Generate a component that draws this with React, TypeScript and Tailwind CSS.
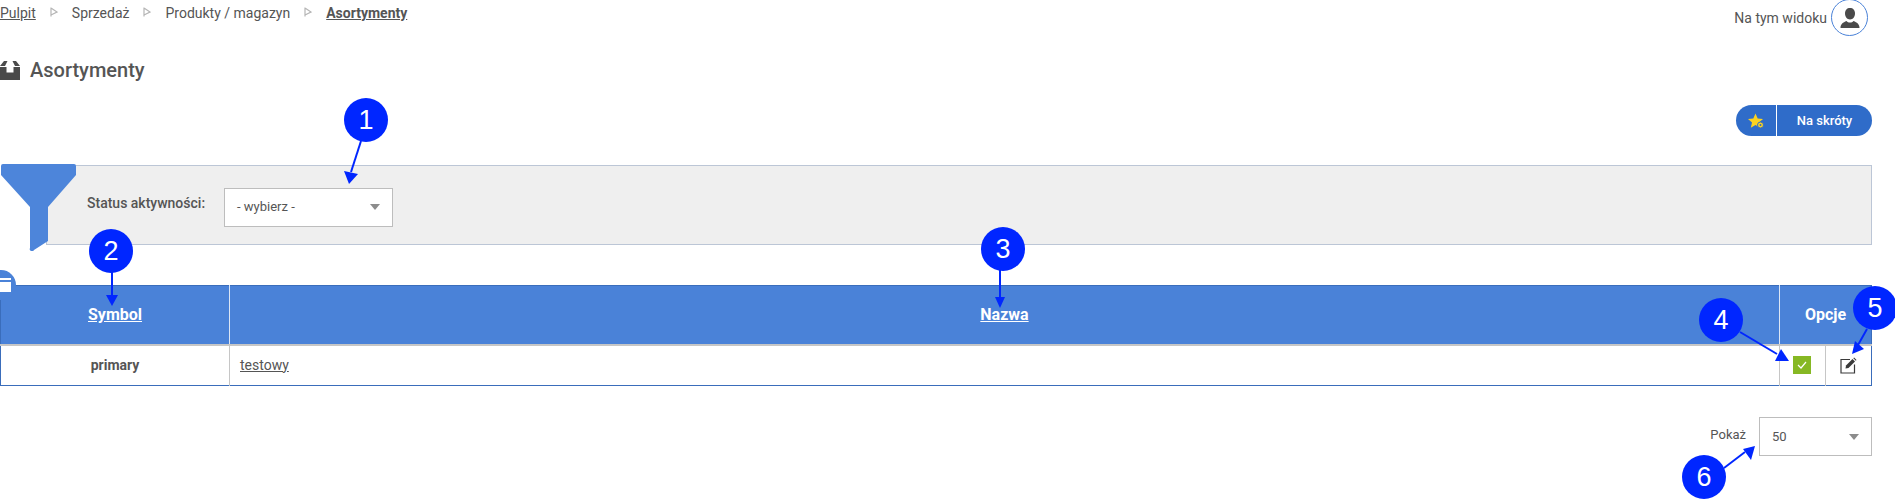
const font = { fontFamily: 'Roboto, "Liberation Sans", sans-serif' };

function Crumb() {
  return (
    <svg width="8" height="10" viewBox="0 0 8 10" className="mx-[14px] shrink-0 -translate-y-px">
      <path d="M1 0.5V9.5M1 1L7 5L1 8" fill="none" stroke="#b5b5b5" strokeWidth="1.2" />
    </svg>
  );
}

function Arrowed() {
  const arrows: [number, number, number, number][] = [
    [361, 141, 351, 172],
    [112, 272, 112, 296],
    [1000, 270, 1000, 298],
    [1740, 332, 1777, 354],
    [1867, 329, 1858, 345],
    [1724, 468, 1745, 452],
  ];
  return (
    <svg width="1895" height="500" className="absolute left-0 top-0 pointer-events-none">
      {arrows.map(([a, b, c, d], i) => (
        <line key={i} x1={a} y1={b} x2={c} y2={d} stroke="#0026ff" strokeWidth="2" />
      ))}
      <polygon points="349,184 344,171 358,174" fill="#0026ff" />
      <polygon points="112,306 106,295 118,295" fill="#0026ff" />
      <polygon points="1000,308 995,297 1005,297" fill="#0026ff" />
      <polygon points="1789,361 1775,361 1781,349" fill="#0026ff" />
      <polygon points="1852,354 1855,341 1864,349" fill="#0026ff" />
      <polygon points="1755,446 1743,449 1751,460" fill="#0026ff" />
    </svg>
  );
}

function Badge({ n, x, y }: { n: number; x: number; y: number }) {
  return (
    <div
      className="absolute flex h-[44px] w-[44px] items-center justify-center rounded-full bg-[#0026ff] text-[27px] text-white"
      style={{ left: x - 22, top: y - 22, fontFamily: '"Liberation Sans", sans-serif' }}
    >
      {n}
    </div>
  );
}

function Select({ label, className }: { label: string; className: string }) {
  return (
    <div className={`flex items-center justify-between border border-[#bdbdbd] bg-white pl-[12px] pr-[12px] text-[13px] text-[#555] ${className}`}>
      <span>{label}</span>
      <span className="h-0 w-0 border-x-[5px] border-t-[6px] border-x-transparent border-t-[#8c8c8c]" />
    </div>
  );
}

export default function App() {
  return (
    <div className="relative h-[500px] w-[1895px] overflow-hidden bg-white text-[#555]" style={font}>
      <div className="w-[1872px]">
        <div className="flex h-[35px] items-start justify-between text-[14px]">
          <div className="flex h-[25px] items-center pt-px">
            <a className="underline">Pulpit</a>
            <Crumb />
            <span>Sprzedaż</span>
            <Crumb />
            <span>Produkty / magazyn</span>
            <Crumb />
            <a className="font-bold underline">Asortymenty</a>
          </div>
          <div className="flex items-center gap-[4px] pr-[4px]">
            <span>Na tym widoku</span>
            <div className="flex h-[37px] w-[37px] -translate-y-px items-center justify-center rounded-full border border-[#4a82d8]">
              <svg width="22" height="22" viewBox="0 0 22 22">
                <path d="M11 1c-3 0-5 2-5 5.500 0 3 2 6 5 6s5-3 5-6C16 3 14 1 11 1z" fill="#4a4a4a" />
                <path d="M1.500 21c0-4 2.500-5.500 6-7 1 1 2 1.500 3.500 1.500s2.500-.5 3.500-1.500c3.500 1.500 6 3 6 7z" fill="#4a4a4a" />
              </svg>
            </div>
          </div>
        </div>

        <div className="mt-[25px] flex h-[20px] items-center gap-[10px]">
          <svg width="20" height="20" viewBox="0 0 20 20">
            <path d="M0 6L4 1H7.500L5 6z M20 6L16 1H12.500L15 6z" fill="#4a4a4a" />
            <path d="M0 7H6.500V12.500H13.500V7H20V20H0z" fill="#4a4a4a" />
          </svg>
          <h1 className="text-[20px] font-medium">Asortymenty</h1>
        </div>

        <div className="mt-[25px] flex justify-end">
          <div className="flex h-[31px] w-[136px] items-stretch overflow-hidden rounded-full bg-[#2f6cc9] text-[13px] font-medium text-white">
            <div className="flex w-[41px] items-center justify-center border-r border-white">
              <svg width="17" height="16" viewBox="0 0 17 16">
                <path d="M7.500 0.500l2.200 5 5.300.5-4 3.500 1.200 5.300-4.700-2.800-4.700 2.800 1.200-5.300-4-3.500 5.300-.5z" fill="#fcd21f" />
                <circle cx="12.500" cy="12" r="3" fill="#fcd21f" stroke="#2f6cc9" />
                <circle cx="12.500" cy="12" r="1" fill="#2f6cc9" />
              </svg>
            </div>
            <div className="flex flex-1 items-center justify-center">Na skróty</div>
          </div>
        </div>

        <div className="relative ml-[46px] mt-[29px] flex h-[80px] items-center border border-[#bcc6d6] bg-[#efefef] pl-[40px] pt-[4px]">
          <svg width="75" height="87" viewBox="0 0 75 87" className="absolute -left-[46px] -top-[2px]">
            <path d="M2 0H73a2 2 0 0 1 2 2V11L47 43V77L33 86a2 2 0 0 1-4-2V43L0 11V2a2 2 0 0 1 2-2z" fill="#4d85da" />
          </svg>
          <label className="w-[137px] -translate-y-[4px] text-[14px] font-medium">Status aktywności:</label>
          <Select label="- wybierz -" className="h-[39px] w-[169px]" />
        </div>

        <div className="relative mt-[40px]">
          <table className="w-[1872px] table-fixed border-collapse border border-[#3a6dbb] text-center text-[14px]">
            <colgroup>
              <col className="w-[229px]" />
              <col />
              <col className="w-[46px]" />
              <col className="w-[46px]" />
            </colgroup>
            <thead>
              <tr className="h-[59px] bg-[#4a82d8] text-[16px] font-bold text-white">
                <th className="border-r border-[#dce6f5]"><a className="underline">Symbol</a></th>
                <th className="border-r border-[#dce6f5]"><a className="underline">Nazwa</a></th>
                <th colSpan={2}>Opcje</th>
              </tr>
            </thead>
            <tbody>
              <tr className="h-[41px] border-t-2 border-[#c6c6c6]">
                <td className="border-r border-[#c6c6c6] font-bold">primary</td>
                <td className="border-r border-[#c6c6c6] pl-[10px] text-left"><a className="underline">testowy</a></td>
                <td className="border-r border-[#c6c6c6]">
                  <div className="mx-auto flex h-[18px] w-[18px] items-center justify-center bg-[#86b824]">
                    <svg width="10" height="8" viewBox="0 0 10 8"><path d="M1 4l3 3 5-6" fill="none" stroke="#fff" strokeWidth="1.200" /></svg>
                  </div>
                </td>
                <td>
                  <svg width="17" height="17" viewBox="0 0 17 17" className="mx-auto">
                    <path d="M10 2.500H1v13.500h13.500V7.500" fill="none" stroke="#3a3a3a" strokeWidth="1.200" />
                    <path d="M6 8.500L12.500 2l2.500 2.500L8.500 11 5.500 11.500z" fill="#3a3a3a" />
                    <path d="M13.300 1.200l.8-.7 2.400 2.400-.7.8z" fill="#3a3a3a" />
                  </svg>
                </td>
              </tr>
            </tbody>
          </table>
          <div className="absolute -left-[14px] -top-[15px] flex h-[30px] w-[30px] items-center justify-end rounded-full bg-[#4a82d8] pr-[5px]">
            <div className="h-[14px] w-[11px] border-b-[10px] border-t-[2px] border-b-white border-t-white bg-[#4a82d8]" />
          </div>
        </div>

        <div className="mt-[31px] flex items-center justify-end gap-[13px] text-[13px]">
          <span className="-translate-y-[2px]">Pokaż</span>
          <Select label="50" className="h-[39px] w-[113px]" />
        </div>
      </div>

      <Arrowed />
      <Badge n={1} x={366} y={120} />
      <Badge n={2} x={111} y={251} />
      <Badge n={3} x={1003} y={249} />
      <Badge n={4} x={1721} y={320} />
      <Badge n={5} x={1875} y={308} />
      <Badge n={6} x={1704} y={477} />
    </div>
  );
}
